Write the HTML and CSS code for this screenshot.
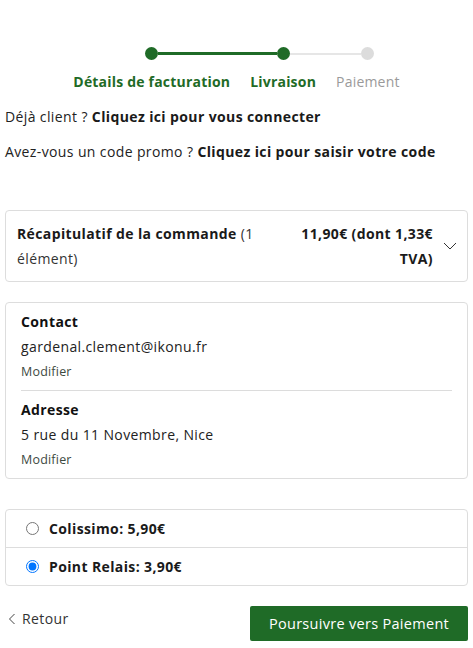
FILE: index.html
```html
<!DOCTYPE html>
<html lang="fr">
<head>
<meta charset="utf-8">
<title>Livraison</title>
<link rel="stylesheet" href="styles.css">
</head>
<body>
<div class="page">
  <div class="stepper">
    <div class="step step-done first">
      <div class="track"><span class="seg seg-left"></span><span class="dot"></span><span class="seg seg-right green"></span></div>
      <div class="step-label active">Détails de facturation</div>
    </div>
    <div class="step step-done">
      <div class="track"><span class="seg seg-left green"></span><span class="dot"></span><span class="seg seg-right grey"></span></div>
      <div class="step-label active">Livraison</div>
    </div>
    <div class="step step-todo last">
      <div class="track"><span class="seg seg-left grey"></span><span class="dot dot-grey"></span><span class="seg seg-right"></span></div>
      <div class="step-label">Paiement</div>
    </div>
  </div>

  <p class="notice notice-first">Déjà client ? <a class="strong-link" href="#">Cliquez ici pour vous connecter</a></p>
  <p class="notice">Avez-vous un code promo ? <a class="strong-link" href="#">Cliquez ici pour saisir votre code</a></p>

  <div class="card summary">
    <div class="summary-title"><strong>Récapitulatif de la commande</strong> <span>(1</span> <span>élément)</span></div>
    <div class="summary-total"><span>11,90€ (dont 1,33€</span> <span>TVA)</span></div>
    <div class="summary-chevron">
      <svg width="14" height="8" viewBox="0 0 14 8"><path d="M1 1 L7 7 L13 1" fill="none" stroke="#333" stroke-width="1"/></svg>
    </div>
  </div>

  <div class="card info">
    <div class="info-block">
      <div class="info-title">Contact</div>
      <div class="info-value">gardenal.clement@ikonu.fr</div>
      <a class="info-edit" href="#">Modifier</a>
    </div>
    <div class="info-sep"></div>
    <div class="info-block">
      <div class="info-title">Adresse</div>
      <div class="info-value">5 rue du 11 Novembre, Nice</div>
      <a class="info-edit" href="#">Modifier</a>
    </div>
  </div>

  <div class="card shipping">
    <label class="ship-row"><input type="radio" name="ship" class="ship-radio"><span>Colissimo: 5,90€</span></label>
    <label class="ship-row"><input type="radio" name="ship" class="ship-radio" checked><span>Point Relais: 3,90€</span></label>
  </div>

  <div class="actions">
    <a class="back" href="#"><svg width="8" height="12" viewBox="0 0 8 12"><path d="M6.5 1 L1.5 6 L6.5 11" fill="none" stroke="#444" stroke-width="1"/></svg><span>Retour</span></a>
    <button class="btn-next" type="button">Poursuivre vers Paiement</button>
  </div>
</div>
</body>
</html>
```

FILE: styles.css
```css
* { box-sizing: border-box; }
body {
  margin: 0;
  background: #fff;
  font-family: "Open Sans", "Liberation Sans", sans-serif;
  font-size: 14px;
  letter-spacing: 0.38px;
  color: #222;
}
.page { padding: 0 5px; }

.stepper {
  display: flex;
  justify-content: center;
  margin-top: 47px;
}
.step {
  display: flex;
  flex-direction: column;
  align-items: stretch;
}
.track {
  display: flex;
  align-items: center;
  height: 13px;
}
.seg { flex: 1; height: 3px; }
.seg.green { background: #1f6b27; }
.seg.grey { background: #e6e6e6; height: 2px; }
.dot {
  width: 13px; height: 13px;
  border-radius: 50%;
  background: #1f6b27;
  flex: none;
}
.dot-grey { background: #dcdcdc; }
.step-label {
  margin-top: 12px;
  padding: 0 10px;
  line-height: 20px;
  font-size: 14px;
  letter-spacing: 0.2px;
  color: #9a9a9a;
  white-space: nowrap;
}
.step-label.active { color: #1f6b27; font-weight: 700; }

.notice { margin: 15px 0 0; line-height: 20px; }
.notice + .notice { margin-top: 15px; }
.strong-link { color: #1a1a1a; font-weight: 700; text-decoration: none; }

.card {
  border: 1px solid #dddddd;
  border-radius: 4px;
  background: #fff;
}

.summary {
  margin-top: 48px;
  display: flex;
  align-items: flex-start;
  padding: 10px 0 10px 11px;
  line-height: 25px;
}
.summary-title { width: 250px; color: #333; }
.summary-title strong { color: #1a1a1a; }
.summary-total {
  margin-left: auto;
  width: 140px;
  text-align: right;
  font-weight: 700;
  color: #1a1a1a;
}
.summary-chevron {
  width: 34px;
  align-self: center;
  display: flex;
  justify-content: center;
}

.info {
  margin-top: 20px;
  padding: 6px 15px;
  line-height: 25px;
}
.info-title { font-weight: 700; color: #111; }
.info-value { color: #222; }
.info-edit { display: block; font-size: 12.5px; letter-spacing: 0.2px; color: #3d4a3f; text-decoration: none; }
.info-sep { height: 1px; background: #dcdcdc; margin: 6px 0; }

.shipping { margin-top: 30px; }
.ship-row {
  display: flex;
  align-items: center;
  height: 37px;
  padding-left: 20px;
  font-weight: 700;
  color: #1a1a1a;
}
.ship-row + .ship-row { border-top: 1px solid #dddddd; height: 38px; }
.ship-radio { margin: 0 10px 0 0; width: 13px; height: 13px; }

.actions {
  margin-top: 20px;
  display: flex;
  justify-content: space-between;
  align-items: flex-start;
}
.back {
  display: flex;
  align-items: center;
  gap: 6px;
  padding-left: 3px;
  line-height: 25px;
  color: #333;
  text-decoration: none;
}
.btn-next {
  width: 218px;
  height: 35px;
  border: 0;
  border-radius: 2px;
  background: #1f6b27;
  color: #fff;
  font-family: inherit;
  font-size: 14.5px;
  letter-spacing: 0.3px;
}
```
